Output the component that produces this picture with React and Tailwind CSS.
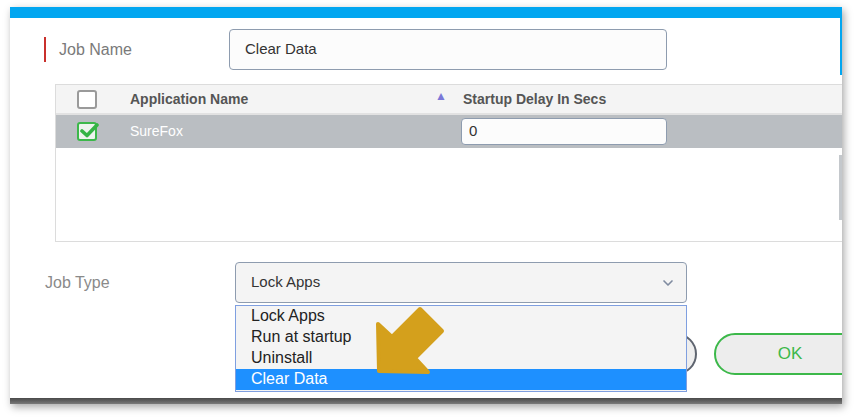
import { ChevronDown } from 'lucide-react'

const font = { fontFamily: '"Liberation Sans", Arial, sans-serif' }

function Box({ checked }) {
  if (!checked) {
    return <div className="h-[19px] w-[20px] rounded-[3px] border-2 border-[#9a9a9a] bg-white" />
  }
  return (
    <div className="relative h-[19px] w-[20px] rounded-[3px] border-2 border-[#3cb84a] bg-[#eef4ee]">
      <svg viewBox="0 0 20 19" className="absolute -left-[2px] -top-[3px] h-[19px] w-[22px]">
        <path d="M4 10 L9 14.5 L19 4" fill="none" stroke="#35b445" strokeWidth="3.6" strokeLinecap="round" strokeLinejoin="round" />
      </svg>
    </div>
  )
}

export default function App() {
  const options = ['Lock Apps', 'Run at startup', 'Uninstall', 'Clear Data']

  return (
    <div className="h-[417px] w-[857px] overflow-hidden bg-white pl-[10px] pt-[7px]" style={font}>
      <div className="relative flex h-[397px] w-[832px] flex-col overflow-hidden bg-white shadow-[2px_3px_8px_rgba(0,0,0,0.35)]">
        <div className="h-[11px] shrink-0 bg-[#02a6f0]" />

        {/* job name */}
        <div className="mt-[11px] flex h-[41px] items-center">
          <div className="ml-[34px] flex h-[25px] w-[185px] items-center border-l-2 border-[#c9302c] pl-[13px] text-[16px] text-[#7a7a7a]">
            Job Name
          </div>
          <div className="flex h-[41px] w-[438px] items-center rounded-[4px] border border-[#8e9caf] bg-[#fcfcfc] pl-[15px] text-[15px] text-[#333]">
            Clear Data
          </div>
        </div>

        {/* table */}
        <div className="ml-[45px] mt-[14px] h-[158px] w-[820px] shrink-0 border border-[#dcdcdc] bg-white">
          <div className="flex h-[30px] items-center border-b-2 border-[#e2e2e2] bg-[#f4f4f4] text-[14px] font-bold text-[#555]">
            <div className="ml-[21px] w-[53px]">
              <Box />
            </div>
            <div className="w-[305px]">Application Name</div>
            <div className="mb-[6px] w-[28px] text-[12px] text-[#7b78d8]">▲</div>
            <div>Startup Delay In Secs</div>
          </div>
          <div className="flex h-[33px] items-center bg-[#babec2] text-[14px] text-white">
            <div className="ml-[21px] w-[53px]">
              <Box checked />
            </div>
            <div className="w-[331px]">SureFox</div>
            <div className="flex h-[27px] w-[206px] items-center rounded-[4px] border border-[#8e9caf] bg-[#fcfcfc] pl-[7px] text-[15px] text-[#333]">
              0
            </div>
          </div>
        </div>

        {/* job type */}
        <div className="mt-[20px] flex h-[41px] items-center">
          <div className="ml-[35px] w-[190px] text-[16px] text-[#8a8a8a]">Job Type</div>
          <div className="flex h-[41px] w-[452px] items-center justify-between rounded-[4px] border border-[#8e9caf] bg-[#f4f4f4] pl-[15px] pr-[10px] text-[15px] text-[#333]">
            Lock Apps
            <ChevronDown className="h-[16px] w-[16px] text-[#7f8ba0]" strokeWidth={2.5} />
          </div>
        </div>

        {/* buttons */}
        <div className="mt-[30px] flex h-[42px] gap-[17px] pl-[535px]">
          <button className="h-[42px] w-[152px] shrink-0 rounded-full border-2 border-[#5f6570] bg-[#eeeeee] text-[17px] text-[#444]">
            Cancel
          </button>
          <button className="h-[42px] w-[152px] shrink-0 rounded-full border-2 border-[#3cb84a] bg-[#ededed] text-[17px] text-[#3cb84a]">
            OK
          </button>
        </div>

        <div className="mt-auto h-[6px] shrink-0 bg-gradient-to-b from-[#4a4a4a] to-[#7a7a7a]" />

        {/* right scroll edge */}
        <div className="absolute right-0 top-[11px] h-[57px] w-[2px] bg-[#02a6f0]" />
        <div className="absolute right-0 top-[148px] h-[65px] w-[3px] bg-[#c4c8cc]" />

        {/* open dropdown */}
        <div className="absolute left-[225px] top-[298px] w-[452px] border border-[#7f9fe0] bg-[#f4f4f4] pb-[1px] text-[16px] text-[#222]">
          {options.map((o) => (
            <div
              key={o}
              className={
                o === 'Clear Data'
                  ? 'h-[21px] bg-[#1e90ff] pl-[15px] leading-[20px] text-white'
                  : 'h-[21px] pl-[15px] leading-[20px]'
              }
            >
              {o}
            </div>
          ))}
        </div>

        {/* pointer arrow */}
        <svg viewBox="0 0 70 70" className="absolute left-[365px] top-[298px] h-[70px] w-[70px]">
          <polygon
            points="4,66 3,19 17,32 45,4 67,26 40,53 53,67"
            fill="#d4a01c"
            stroke="#d4a01c"
            strokeWidth="4"
            strokeLinejoin="round"
          />
        </svg>
      </div>
    </div>
  )
}
